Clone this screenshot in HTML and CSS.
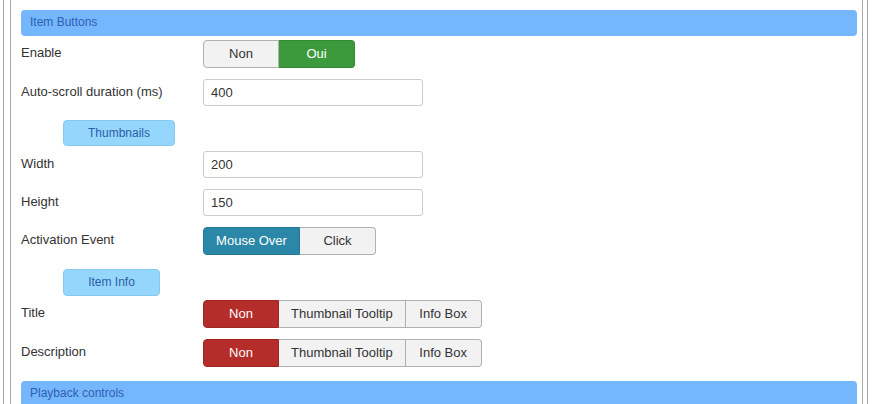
FILE: index.html
```html
<!DOCTYPE html>
<html>
<head>
<meta charset="utf-8">
<link rel="stylesheet" href="styles.css">
</head>
<body>
<div class="outer">
  <div class="inner">
    <div class="section-bar">Item Buttons</div>
    <div class="row row-first">
      <div class="label">Enable</div>
      <div class="btn-group">
        <span class="btn">Non</span>
        <span class="btn active-green">Oui</span>
      </div>
    </div>
    <div class="row">
      <div class="label">Auto-scroll duration (ms)</div>
      <div class="input">400</div>
    </div>
    <div class="badge-row"><span class="badge badge-thumbs">Thumbnails</span></div>
    <div class="row">
      <div class="label">Width</div>
      <div class="input">200</div>
    </div>
    <div class="row">
      <div class="label">Height</div>
      <div class="input">150</div>
    </div>
    <div class="row">
      <div class="label">Activation Event</div>
      <div class="btn-group">
        <span class="btn active-teal">Mouse Over</span>
        <span class="btn">Click</span>
      </div>
    </div>
    <div class="badge-row"><span class="badge badge-info">Item Info</span></div>
    <div class="row">
      <div class="label">Title</div>
      <div class="btn-group">
        <span class="btn active-red">Non</span>
        <span class="btn">Thumbnail Tooltip</span>
        <span class="btn">Info Box</span>
      </div>
    </div>
    <div class="row">
      <div class="label">Description</div>
      <div class="btn-group">
        <span class="btn active-red">Non</span>
        <span class="btn">Thumbnail Tooltip</span>
        <span class="btn">Info Box</span>
      </div>
    </div>
    <div class="section-bar section-bar-last">Playback controls</div>
  </div>
</div>
</body>
</html>
```
FILE: styles.css
```css
html, body {
  margin: 0;
  padding: 0;
  background: #ffffff;
  height: 404px;
  overflow: hidden;
}
body {
  font-family: "Liberation Sans", Arial, sans-serif;
  font-size: 13px;
  color: #333333;
}
.outer {
  margin-left: 3px;
  width: 863px;
  height: 404px;
  border-left: 1px solid #a9a9a9;
  border-right: 1px solid #a9a9a9;
  overflow: hidden;
}
.inner {
  margin-left: 6px;
  width: 836px;
  height: 394px;
  border-left: 1px solid #a9a9a9;
  border-right: 1px solid #a9a9a9;
  padding: 10px 5px 0 10px;
  overflow: hidden;
}
.section-bar {
  height: 26px;
  line-height: 24px;
  background: #74b7fc;
  border-radius: 4px;
  color: #2f5eb3;
  font-size: 12px;
  padding-left: 9px;
}
.section-bar-last {
  margin-top: 14px;
}
.row {
  display: flex;
  align-items: center;
  margin-top: 11px;
}
.row-first {
  margin-top: 4px;
}
.badge-row + .row {
  margin-top: 5px;
}
.label {
  width: 182px;
  flex: none;
  padding-bottom: 3px;
}
.input {
  box-sizing: border-box;
  width: 220px;
  height: 27px;
  line-height: 25px;
  border: 1px solid #cccccc;
  border-radius: 3px;
  padding-left: 7px;
  color: #333333;
}
.btn-group {
  display: inline-flex;
  height: 28px;
}
.btn {
  box-sizing: border-box;
  min-width: 76px;
  padding: 0 12px;
  height: 28px;
  line-height: 26px;
  text-align: center;
  background: #f2f2f2;
  border: 1px solid #b0b0b0;
  border-left-width: 0;
  color: #333333;
}
.btn:first-child {
  border-left-width: 1px;
  border-radius: 4px 0 0 4px;
}
.btn:last-child {
  border-radius: 0 4px 4px 0;
}
.active-green {
  background: #3c9a3d;
  border-color: #348a35;
  color: #ffffff;
}
.active-teal {
  background: #2a87a7;
  border-color: #237896;
  color: #ffffff;
  min-width: 97px;
}
.active-red {
  background: #b52d2a;
  border-color: #a02624;
  color: #ffffff;
}
.badge-row {
  margin-top: 14px;
  padding-left: 42px;
  height: 26px;
}
.badge {
  display: inline-block;
  box-sizing: border-box;
  height: 26px;
  line-height: 24px;
  text-align: center;
  background: #95d6fc;
  border: 1px solid #86c9ef;
  border-radius: 4px;
  color: #2d5ea6;
  font-size: 12px;
}
.badge-thumbs {
  width: 112px;
}
.badge-info {
  width: 97px;
  height: 27px;
  line-height: 25px;
}
```
